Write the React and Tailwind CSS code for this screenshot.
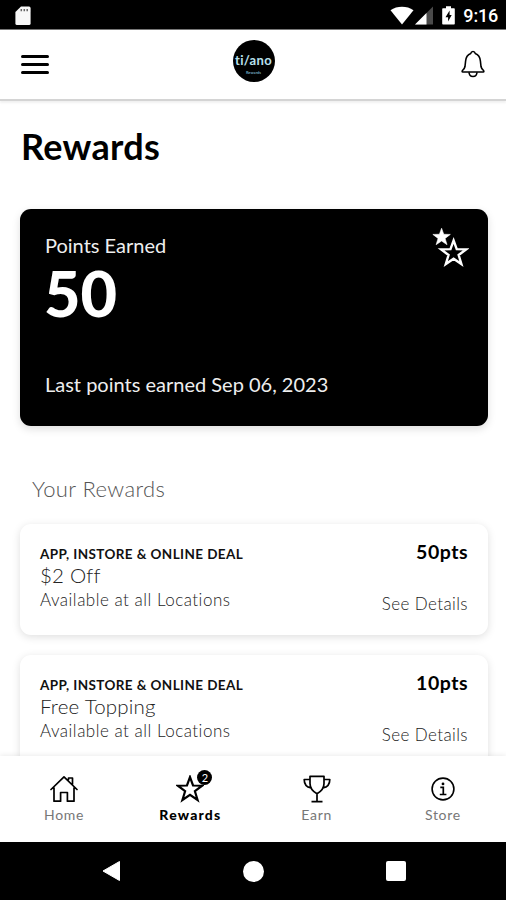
const STAR =
  "M12 1.8 L14.6 9 L22.4 9.2 L16.2 13.9 L18.5 21.4 L12 17 L5.5 21.4 L7.8 13.9 L1.6 9.2 L9.4 9 Z";

function StatusBar() {
  return (
    <div className="h-[29px] shrink-0 bg-black flex items-center justify-between pl-[15px] pr-[8px] pt-[2px] text-white">
      <svg width="16" height="20" viewBox="0 0 16 20">
        <path d="M6 0.5h8a1.6 1.6 0 0 1 1.6 1.6v15.4a1.6 1.6 0 0 1-1.6 1.6H2a1.6 1.6 0 0 1-1.6-1.6V6z" fill="#f8f8f8" />
        <path d="M6.3 3v2.3M9.3 3v2.3M12.2 3v2.3" stroke="#666" strokeWidth="1.5" />
      </svg>
      <div className="flex items-center">
        <svg width="24" height="19" viewBox="0 0 24 19">
          <path d="M0.5 4.2C7 -0.4 17 -0.4 23.5 4.2L12 18.5z" fill="#fff" />
        </svg>
        <svg className="ml-[1px]" width="18" height="19" viewBox="0 0 18 19">
          <path d="M18 0.5V18.5H0z" fill="#4a4a4a" />
          <path d="M11.5 7V18.5H0z" fill="#fff" />
        </svg>
        <svg className="ml-[9px]" width="13" height="19" viewBox="0 0 13 19">
          <path d="M4 0.3h5v2h3a.8.8 0 0 1 .8.8v14.6a.8.8 0 0 1-.8.8H1a.8.8 0 0 1-.8-.8V3.1a.8.8 0 0 1 .8-.8h3z" fill="#fff" />
          <path d="M7.6 4.5L3.5 11.2h2.6V15.5L9.7 9H7.6z" fill="#000" />
        </svg>
        <span className="ml-[8px] font-['Roboto'] font-medium text-[18px] leading-[20px] tracking-[-0.2px]">9:16</span>
      </div>
    </div>
  );
}

function Header() {
  return (
    <header className="relative h-[72px] shrink-0 flex items-center justify-between pl-[21px] pr-[21px] border-t border-t-[#777] border-b-2 border-b-[#d4d4d4] shadow-[0_2px_2px_rgba(0,0,0,0.06)]">
      <div className="w-[28px] flex flex-col gap-[5px]">
        <div className="h-[3px] bg-black rounded-xs" />
        <div className="h-[3px] bg-black rounded-xs" />
        <div className="h-[3px] bg-black rounded-xs" />
      </div>
      <div className="w-[42px] h-[42px] mb-[7px] ml-[-3px] rounded-full bg-black flex flex-col items-center pt-[14px]">
        <div className="text-[13px] leading-[13px] font-bold tracking-[0.3px] text-[#b9e0ee]">ti/ano</div>
        <div className="mt-[3px] text-[4px] leading-[5px] font-bold text-[#6fa5bd]">Rewards</div>
      </div>
      <svg className="mb-[2px]" width="24" height="28" viewBox="0 0 24 28" fill="none" stroke="#000" strokeWidth="1.6" strokeLinejoin="round">
        <path d="M9.8 3.4C10.3 .9 13.7 .9 14.2 3.4C17.4 4.6 19.1 7 19.4 11L20 16.5C20.3 18.2 21 19 22.3 20.3C23.2 21.3 23 22 22.2 22H1.8C1 22 .8 21.3 1.7 20.3C3 19 3.7 18.2 4 16.5L4.6 11C4.9 7 6.6 4.6 9.8 3.4Z" />
        <path d="M8 22.2C8.3 28 15.7 28 16 22.2" />
      </svg>
    </header>
  );
}

function RewardCard({ title, pts }) {
  return (
    <div className="h-[111px] shrink-0 rounded-[11px] bg-white shadow-[0_2px_9px_rgba(0,0,0,0.13)] px-5 pt-[19px] flex justify-between">
      <div>
        <div className="text-[13.5px] leading-[22px] font-bold text-[#111] tracking-[0.4px] whitespace-nowrap">APP, INSTORE &amp; ONLINE DEAL</div>
        <div className="mt-[-1px] text-[20.5px] leading-[22px] font-light text-[#222] tracking-[0.2px]">{title}</div>
        <div className="mt-[2px] text-[17px] leading-[24px] font-light text-[#222] tracking-[0.5px]">Available at all Locations</div>
      </div>
      <div className="text-right">
        <div className="mt-[-2px] text-[19.5px] leading-[22px] font-bold text-black tracking-[0.5px]">{pts}</div>
        <div className="mt-[29px] text-[17px] leading-[24px] font-light text-[#222] tracking-[0.4px]">See Details</div>
      </div>
    </div>
  );
}

function NavItem({ label, active, children }) {
  return (
    <div className="flex-1 flex flex-col items-center pt-[19px]">
      <div className="h-[28px] relative">{children}</div>
      <div className={active ? "mt-[3px] text-[14px] leading-[18px] tracking-[1.2px] font-black text-black" : "mt-[3px] text-[14px] leading-[18px] tracking-[0.7px] text-[#777]"}>
        {label}
      </div>
    </div>
  );
}

export default function App() {
  return (
    <div className="w-[506px] h-[900px] flex flex-col overflow-hidden bg-white font-['Lato','Liberation_Sans',sans-serif]">
      <StatusBar />
      <Header />
      <main className="h-[655px] shrink-0 overflow-hidden flex flex-col pl-5 pr-[18px]">
        <h1 className="mt-[25px] ml-[1px] text-[36px] leading-[40px] font-bold tracking-[0.3px] text-black">Rewards</h1>
        <section className="mt-[43px] h-[217px] shrink-0 rounded-[11px] bg-black text-[#eee] shadow-[0_3px_9px_rgba(0,0,0,0.13)] pl-[25px] pr-[19px] flex justify-between">
          <div className="pt-[24px]">
            <div className="text-[20px] leading-[24px]">Points Earned</div>
            <div className="mt-[6px] ml-[-1px] text-[63px] leading-[60px] font-black text-white">50</div>
            <div className="mt-[49px] text-[20px] leading-[24px] whitespace-nowrap">Last points earned Sep 06, 2023</div>
          </div>
          <svg className="mt-[18px]" width="37" height="42" viewBox="0 0 37 42">
            <path transform="translate(-.5 -.3) scale(.84)" d={STAR} fill="#fff" stroke="#fff" strokeWidth=".7" />
            <path transform="translate(7.2 11.3) scale(1.2)" d={STAR} fill="#000" stroke="#fff" strokeWidth="2" />
          </svg>
        </section>
        <h2 className="mt-[50px] ml-[12px] text-[22px] leading-[26px] font-light tracking-[0.4px] text-[#555]">Your Rewards</h2>
        <div className="mt-[22px] flex flex-col gap-[20px]">
          <RewardCard title="$2 Off" pts="50pts" />
          <RewardCard title="Free Topping" pts="10pts" />
        </div>
      </main>
      <nav className="h-[86px] shrink-0 bg-white flex relative pl-px shadow-[0_-1px_5px_rgba(0,0,0,0.08)]">
        <NavItem label="Home">
          <svg width="28" height="28" viewBox="0 0 28 28" fill="none" stroke="#000" strokeWidth="1.7">
            <path d="M1 14.5L14 1.8L27 14.5M18.5 4.5V3H22.5V9M4 12.5V26.2H10.6V17.5H17.4V26.2H24V12.5" strokeLinejoin="round" strokeLinecap="round" />
          </svg>
        </NavItem>
        <NavItem label="Rewards" active>
          <svg width="28" height="28" viewBox="0 0 24 24" fill="none" stroke="#000" strokeWidth="1.9">
            <path d={STAR} />
          </svg>
          <div className="absolute left-[21px] top-[-5px] w-[15px] h-[15px] rounded-full bg-black text-white text-[11px] leading-[15px] text-center">2</div>
        </NavItem>
        <NavItem label="Earn">
          <svg width="28" height="28" viewBox="0 0 28 28" fill="none" stroke="#000" strokeWidth="1.7" strokeLinejoin="round">
            <path d="M7 1.3H21V8.5C21 13.5 18 16.5 14 18.8C10 16.5 7 13.5 7 8.5ZM7 4.5H1.2C1.2 9.5 3 12 8 13M21 4.5H26.8C26.8 9.5 25 12 20 13M14 18.8V26.5M8.5 26.6H19.5" />
          </svg>
        </NavItem>
        <NavItem label="Store">
          <svg width="28" height="28" viewBox="0 0 28 28" fill="none" stroke="#000" strokeWidth="1.6">
            <circle cx="14" cy="14" r="10.9" />
            <path d="M11.3 12.3H14.3V19.2M10.8 19.5H17.4" strokeWidth="1.7" />
            <circle cx="14" cy="8.9" r="1.4" fill="#000" stroke="none" />
          </svg>
        </NavItem>
      </nav>
      <div className="h-[58px] shrink-0 bg-black flex items-center">
        <svg className="ml-[101px]" width="20" height="22" viewBox="0 0 20 22">
          <path d="M18.5 1.5V20.5L2 11z" fill="#fff" stroke="#fff" strokeLinejoin="round" />
        </svg>
        <div className="ml-[122px] w-[21px] h-[21px] rounded-full bg-white" />
        <div className="ml-[122px] w-[20px] h-[20px] rounded-xs bg-white" />
      </div>
    </div>
  );
}
